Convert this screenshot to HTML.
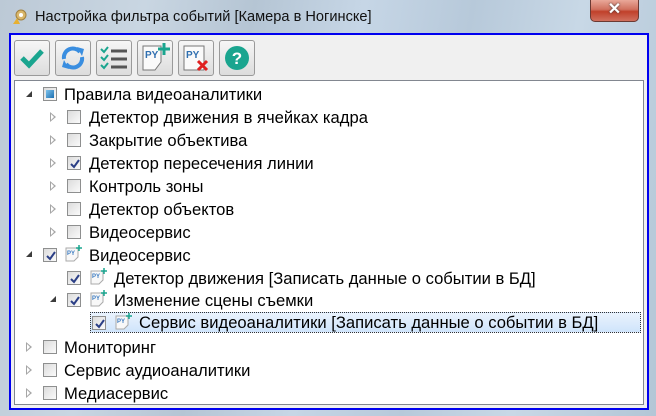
<!DOCTYPE html>
<html><head><meta charset="utf-8"><style>
*{margin:0;padding:0;box-sizing:border-box}
body{width:656px;height:416px;overflow:hidden;position:relative;font-family:"Liberation Sans","Noto Sans CJK JP",sans-serif;
background:linear-gradient(100deg,#bcc9d6 0%,#c9d6e2 20%,#b5c5d4 35%,#c6d6e6 50%,#b7c9da 65%,#c8d8e6 80%,#b3c6d6 100%)}
.title{position:absolute;left:35px;top:9px;font-size:14.6px;color:#111}
.close{position:absolute;left:590px;top:0;width:49px;height:22px;border:1px solid #6b3a33;border-top:none;border-radius:0 0 5px 5px;
background:linear-gradient(#e9a899,#d0705e 45%,#c0402a 55%,#d0705e);color:#fff;font-weight:bold;font-size:16px;text-align:center;line-height:20px;text-shadow:0 0 2px #333}
.client{position:absolute;left:9px;top:33px;width:640px;height:377px;border:2px solid #0000f0;background:#f0f0f0}
.btn{position:absolute;top:40px;width:36px;height:36px;border:1px solid #9a9a9a;border-radius:3px;background:linear-gradient(#f6f6f6,#dcdcdc)}
.tree{position:absolute;left:14px;top:80px;width:630px;height:325px;border:1px solid #828790;background:#fff}
.row{position:absolute;height:23px;font-size:16.6px;line-height:23px;color:#000;white-space:nowrap}
.cb{position:absolute;width:14px;height:14px;border:1px solid #8e8f8f;background:linear-gradient(135deg,#dcdcdc,#fafafa)}
.cb svg{position:absolute;left:1px;top:1px}
.oo{position:absolute;width:7px;height:10px}
.oo::before{content:"";position:absolute;left:0;top:0;border-left:6px solid #a6a6a6;border-top:5px solid transparent;border-bottom:5px solid transparent}
.oo::after{content:"";position:absolute;left:1px;top:2px;border-left:3px solid #fff;border-top:3px solid transparent;border-bottom:3px solid transparent}
.ex{position:absolute;width:0;height:0;border-right:6px solid #3c3c3c;border-top:6px solid transparent}
.sel{position:absolute;left:90px;top:312px;width:551px;height:21px;border:1px dotted #333;background:linear-gradient(#eaf3fd,#cfe4fb)}
</style></head><body>
<svg style="position:absolute;left:10px;top:8px" width="18" height="18"><circle cx="11" cy="7" r="5" fill="#d9b66a" stroke="#a08040"/><circle cx="11" cy="7" r="2" fill="#fff"/><path d="M3 16 L7 10 L10 16Z" fill="#e8b030"/></svg>
<div class="title">Настройка фильтра событий [Камера в Ногинске]</div>
<div class="close">✕</div>
<div class="client"></div>
<div class="btn" style="left:14px"><svg width="34" height="34"><path d="M7 17 L14 24 L27 10" stroke="#1aa58f" stroke-width="5" fill="none"/></svg></div>
<div class="btn" style="left:55px"><svg width="34" height="34"><path d="M8 18 A9 9 0 0 1 24 11" stroke="#3a8ee0" stroke-width="4" fill="none"/><path d="M26 16 A9 9 0 0 1 10 23" stroke="#3a8ee0" stroke-width="4" fill="none"/><path d="M21 6 L28 8 L26 15Z" fill="#3a8ee0"/><path d="M13 28 L6 26 L8 19Z" fill="#3a8ee0"/></svg></div>
<div class="btn" style="left:96px"><svg width="34" height="34"><g stroke="#1aa58f" stroke-width="2" fill="none"><path d="M4 8 l3 3 l4 -5"/><path d="M4 16 l3 3 l4 -5"/><path d="M4 24 l3 3 l4 -5"/></g><g stroke="#555" stroke-width="3"><path d="M14 10h16M14 18h16M14 26h16"/></g></svg></div>
<div class="btn" style="left:137px"><svg width="34" height="34"><path d="M5 5h18v16l-6 8H5Z" fill="#fafafa" stroke="#777"/><text x="7" y="17" font-size="10" font-weight="bold" fill="#2f6fb0" font-family="Liberation Sans">PY</text><path d="M26 2v12M20 8h12" stroke="#1aa58f" stroke-width="3"/></svg></div>
<div class="btn" style="left:178px"><svg width="34" height="34"><path d="M5 5h20v24H5Z" fill="#fafafa" stroke="#777"/><text x="7" y="17" font-size="10" font-weight="bold" fill="#2f6fb0" font-family="Liberation Sans">PY</text><path d="M19 20l9 9M28 20l-9 9" stroke="#e02020" stroke-width="3"/></svg></div>
<div class="btn" style="left:219px"><svg width="34" height="34"><circle cx="17" cy="17" r="12" fill="#1aa58f"/><text x="17" y="23" text-anchor="middle" font-size="17" font-weight="bold" fill="#fff" font-family="Liberation Sans">?</text></svg></div>
<div class="tree"></div>
<div class="sel"></div>
<div class="ex" style="left:26px;top:91px"></div>
<div class="cb" style="left:43px;top:87px"><div style="position:absolute;left:2px;top:2px;width:8px;height:8px;background:linear-gradient(135deg,#7fc3ec,#1c6fb0)"></div></div>
<div class="row" style="left:64px;top:83px">Правила видеоаналитики</div>

<div class="oo" style="left:50px;top:112px"></div><div class="cb" style="left:67px;top:110px"></div><div class="row" style="left:89px;top:106px">Детектор движения в ячейках кадра</div>
<div class="oo" style="left:50px;top:135px"></div><div class="cb" style="left:67px;top:133px"></div><div class="row" style="left:89px;top:129px">Закрытие объектива</div>
<div class="oo" style="left:50px;top:158px"></div><div class="cb" style="left:67px;top:156px"><svg width="12" height="12"><path d="M2 6l3 3l5-7" stroke="#2b3f86" stroke-width="2" fill="none"/></svg></div><div class="row" style="left:89px;top:152px">Детектор пересечения линии</div>
<div class="oo" style="left:50px;top:181px"></div><div class="cb" style="left:67px;top:179px"></div><div class="row" style="left:89px;top:175px">Контроль зоны</div>
<div class="oo" style="left:50px;top:204px"></div><div class="cb" style="left:67px;top:202px"></div><div class="row" style="left:89px;top:198px">Детектор объектов</div>
<div class="oo" style="left:50px;top:227px"></div><div class="cb" style="left:67px;top:225px"></div><div class="row" style="left:89px;top:221px">Видеосервис</div>

<div class="ex" style="left:26px;top:251px"></div>
<div class="cb" style="left:43px;top:248px"><svg width="12" height="12"><path d="M2 6l3 3l5-7" stroke="#2b3f86" stroke-width="2" fill="none"/></svg></div>
<svg style="position:absolute;left:64px;top:244px" width="18" height="18"><path d="M2 4h12v9l-4 4H2Z" fill="#f8f8f8" stroke="#aaa"/><text x="3" y="11" font-size="6" font-weight="bold" fill="#3a7ac0" font-family="Liberation Sans">PY</text><path d="M15 1v6M12 4h6" stroke="#1aa58f" stroke-width="1.5"/></svg>
<div class="row" style="left:89px;top:244px">Видеосервис</div>

<div class="cb" style="left:67px;top:271px"><svg width="12" height="12"><path d="M2 6l3 3l5-7" stroke="#2b3f86" stroke-width="2" fill="none"/></svg></div>
<svg style="position:absolute;left:89px;top:267px" width="18" height="18"><path d="M2 4h12v9l-4 4H2Z" fill="#f8f8f8" stroke="#aaa"/><text x="3" y="11" font-size="6" font-weight="bold" fill="#3a7ac0" font-family="Liberation Sans">PY</text><path d="M15 1v6M12 4h6" stroke="#1aa58f" stroke-width="1.5"/></svg>
<div class="row" style="left:114px;top:267px">Детектор движения [Записать данные о событии в БД]</div>

<div class="ex" style="left:50px;top:296px"></div>
<div class="cb" style="left:67px;top:293px"><svg width="12" height="12"><path d="M2 6l3 3l5-7" stroke="#2b3f86" stroke-width="2" fill="none"/></svg></div>
<svg style="position:absolute;left:89px;top:289px" width="18" height="18"><path d="M2 4h12v9l-4 4H2Z" fill="#f8f8f8" stroke="#aaa"/><text x="3" y="11" font-size="6" font-weight="bold" fill="#3a7ac0" font-family="Liberation Sans">PY</text><path d="M15 1v6M12 4h6" stroke="#1aa58f" stroke-width="1.5"/></svg>
<div class="row" style="left:114px;top:289px">Изменение сцены съемки</div>

<div class="cb" style="left:92px;top:316px"><svg width="12" height="12"><path d="M2 6l3 3l5-7" stroke="#2b3f86" stroke-width="2" fill="none"/></svg></div>
<svg style="position:absolute;left:114px;top:312px" width="18" height="18"><path d="M2 4h12v9l-4 4H2Z" fill="#f8f8f8" stroke="#aaa"/><text x="3" y="11" font-size="6" font-weight="bold" fill="#3a7ac0" font-family="Liberation Sans">PY</text><path d="M15 1v6M12 4h6" stroke="#1aa58f" stroke-width="1.5"/></svg>
<div class="row" style="left:139px;top:311px">Сервис видеоаналитики [Записать данные о событии в БД]</div>

<div class="oo" style="left:26px;top:342px"></div><div class="cb" style="left:43px;top:340px"></div><div class="row" style="left:64px;top:336px">Мониторинг</div>
<div class="oo" style="left:26px;top:365px"></div><div class="cb" style="left:43px;top:363px"></div><div class="row" style="left:64px;top:359px">Сервис аудиоаналитики</div>
<div class="oo" style="left:26px;top:388px"></div><div class="cb" style="left:43px;top:386px"></div><div class="row" style="left:64px;top:382px">Медиасервис</div>
</body></html>
